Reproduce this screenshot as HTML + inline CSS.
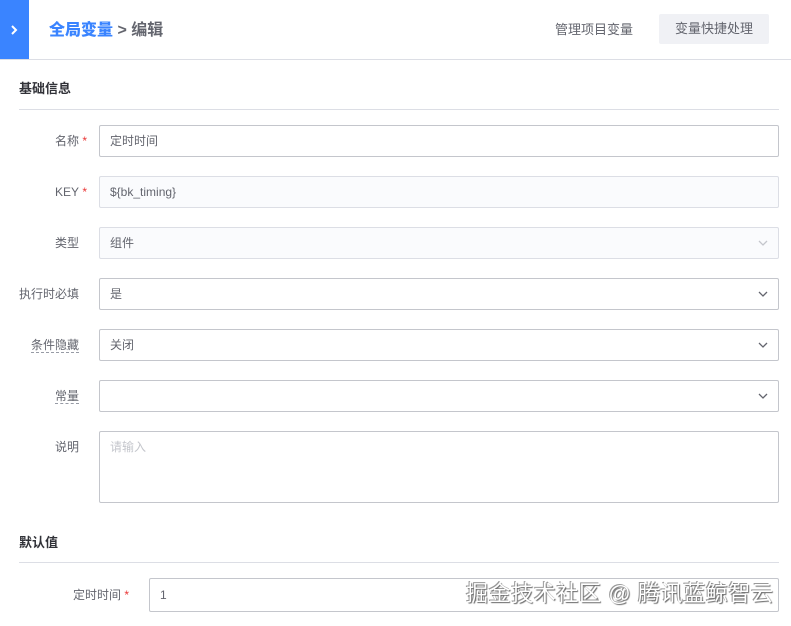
<!DOCTYPE html>
<html><head><meta charset="utf-8"><style>
*{box-sizing:border-box;margin:0;padding:0}
body{width:791px;height:626px;overflow:hidden;background:#fff;font-family:"Liberation Sans","Noto Sans CJK SC",sans-serif;color:#63656e;font-size:12px;position:relative}
.abs{position:absolute}
.hdr{left:0;top:0;width:791px;height:60px;border-bottom:1px solid #dcdee5}
.blue{left:0;top:0;width:29px;height:59px;background:#3a84ff}
.title{left:49px;top:20px;font-size:16px;color:#63656e;line-height:22px;font-weight:bold}
.title b{color:#3a84ff}
.link{left:555px;top:21px;font-size:13px;color:#63656e;line-height:18px}
.btn{left:659px;top:14px;width:110px;height:30px;background:#f0f1f5;border-radius:2px;font-size:13px;line-height:30px;text-align:center;color:#63656e}
.sec{left:19px;font-size:13px;font-weight:bold;color:#313238;line-height:18px}
.line{left:19px;width:760px;height:1px;background:#dcdee5}
.lbl{width:79px;text-align:right;line-height:32px;font-size:12px;color:#63656e}
.lbl i{font-style:normal;color:#ea3636;position:absolute;right:-8px;top:0}
.u{border-bottom:1px dashed #979ba5;line-height:16px}
.in{left:99px;width:680px;height:32px;border:1px solid #c4c6cc;border-radius:2px;padding-left:10px;line-height:30px;color:#63656e}
.dis{background:#fafbfd;border-color:#dcdee5}
.arr{position:absolute;right:9px;top:9px;width:12px;height:12px}
</style></head><body>
<div class="abs hdr"></div>
<div class="abs blue"><svg width="29" height="59"><path d="M12 26l4 4-4 4" stroke="#fff" stroke-width="2" fill="none"/></svg></div>
<div class="abs title"><b>全局变量</b> &gt; 编辑</div>
<div class="abs link">管理项目变量</div>
<div class="abs btn">变量快捷处理</div>

<div class="abs sec" style="top:80px">基础信息</div>
<div class="abs line" style="top:109px"></div>

<div class="abs lbl" style="left:0;top:125px">名称<i>*</i></div>
<div class="abs in" style="top:125px">定时时间</div>
<div class="abs lbl" style="left:0;top:176px">KEY<i>*</i></div>
<div class="abs in dis" style="top:176px">${bk_timing}</div>
<div class="abs lbl" style="left:0;top:227px">类型</div>
<div class="abs in dis" style="top:227px">组件<svg class="arr" viewBox="0 0 12 12"><path d="M2 4l4 4 4-4" stroke="#c4c6cc" stroke-width="1.3" fill="none"/></svg></div>
<div class="abs lbl" style="left:0;top:278px">执行时必填</div>
<div class="abs in" style="top:278px">是<svg class="arr" viewBox="0 0 12 12"><path d="M2 4l4 4 4-4" stroke="#63656e" stroke-width="1.3" fill="none"/></svg></div>
<div class="abs lbl" style="left:0;top:329px"><span class="u">条件隐藏</span></div>
<div class="abs in" style="top:329px">关闭<svg class="arr" viewBox="0 0 12 12"><path d="M2 4l4 4 4-4" stroke="#63656e" stroke-width="1.3" fill="none"/></svg></div>
<div class="abs lbl" style="left:0;top:380px"><span class="u">常量</span></div>
<div class="abs in" style="top:380px"><svg class="arr" viewBox="0 0 12 12"><path d="M2 4l4 4 4-4" stroke="#63656e" stroke-width="1.3" fill="none"/></svg></div>
<div class="abs lbl" style="left:0;top:431px">说明</div>
<div class="abs in" style="top:431px;height:72px;color:#c4c6cc;line-height:30px">请输入</div>

<div class="abs sec" style="top:534px">默认值</div>
<div class="abs line" style="top:562px"></div>
<div class="abs lbl" style="left:42px;top:578px;height:34px;line-height:34px">定时时间<i style="line-height:34px">*</i></div>
<div class="abs in" style="left:149px;width:630px;top:578px;height:34px;line-height:32px">1</div>
<div class="abs" style="left:466px;top:580px;font-size:22px;letter-spacing:0.6px;color:#fff;line-height:28px;text-shadow:1px 1px 1px #666,-1px -1px 0 #999">掘金技术社区 @ 腾讯蓝鲸智云</div>
</body></html>
